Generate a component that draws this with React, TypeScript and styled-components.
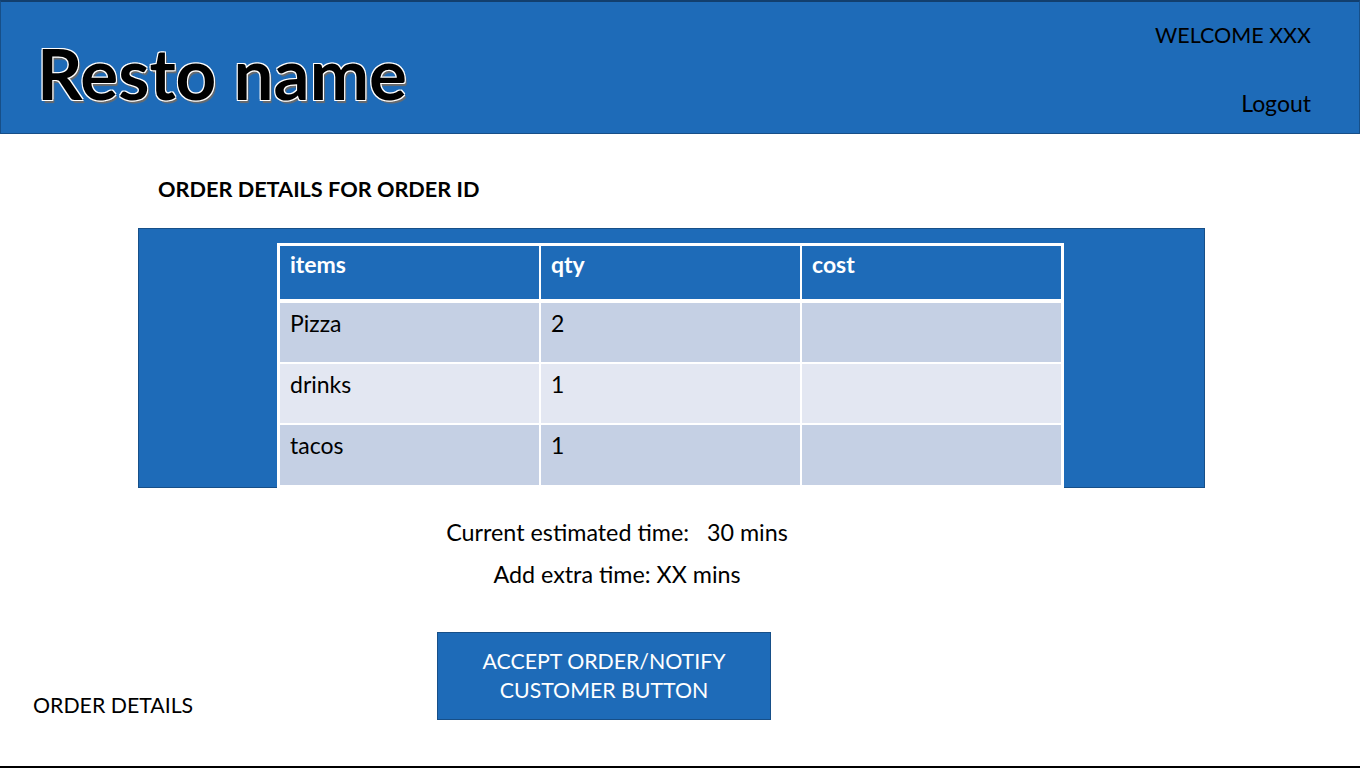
import React from "react";
import styled, { createGlobalStyle } from "styled-components";

const Global = createGlobalStyle`
  html, body { margin: 0; padding: 0; background: #fff; }
  body { font-family: Lato, "Open Sans", sans-serif; color: #000; }
`;

const BLUE = "#1e6bb8";

const Page = styled.div`
  width: 1360px;
  height: 768px;
  box-sizing: border-box;
  border-bottom: 2px solid #000;
  display: flex;
  flex-direction: column;
  overflow: hidden;
`;

const Header = styled.header`
  height: 134px;
  box-sizing: border-box;
  background: ${BLUE};
  border: 1px solid #174f88;
  border-top: 2px solid #123f6e;
  display: flex;
  justify-content: space-between;
  padding: 0 48px 0 36px;
`;

const Brand = styled.h1`
  margin: 0;
  padding-top: 28px;
  font-size: 71px;
  font-weight: 700;
  letter-spacing: 0;
  line-height: 1.2;
  color: #000;
  text-shadow:
    -1px -1px 0 #fff, 1px -1px 0 #fff, -1px 1px 0 #fff, 1px 1px 0 #fff,
    2px 3px 1px #6b6b6b;
`;

const UserBox = styled.div`
  display: flex;
  flex-direction: column;
  align-items: flex-end;
  padding-top: 18px;
  gap: 38px;
  font-size: 21.5px;
  line-height: 30px;
`;

const Logout = styled.span`
  font-size: 23px;
`;

const Main = styled.main`
  flex: 1;
  display: flex;
  flex-direction: column;
`;

const Title = styled.h2`
  margin: 42px 0 0 158px;
  font-size: 21.7px;
  font-weight: 700;
  line-height: 26px;
`;

const Panel = styled.section`
  margin: 26px 0 0 138px;
  width: 1067px;
  height: 260px;
  box-sizing: border-box;
  background: ${BLUE};
  border: 1px solid #174f88;
  display: flex;
  justify-content: flex-start;
  padding: 15px 0 0 139px;
`;

const Table = styled.table`
  border-collapse: collapse;
  width: 785px;
  table-layout: fixed;
  font-size: 23px;
  outline: 1px solid #fff;
`;

const Th = styled.th`
  height: 56px;
  box-sizing: border-box;
  border: 2px solid #fff;
  border-bottom: 4px solid #fff;
  color: #fff;
  font-weight: 700;
  text-align: left;
  vertical-align: top;
  padding: 4px 10px 0;
  line-height: 28px;
`;

const Td = styled.td<{ $alt: boolean }>`
  height: 60px;
  box-sizing: border-box;
  border: 2px solid #fff;
  background: ${(p) => (p.$alt ? "#e3e7f2" : "#c5d0e4")};
  vertical-align: top;
  padding: 6px 10px 0;
  line-height: 28px;
`;

const Info = styled.div`
  margin: 29px 0 0 0;
  width: 1234px;
  display: flex;
  flex-direction: column;
  align-items: center;
  gap: 12px;
  font-size: 23.3px;
  line-height: 30px;
`;

const Footer = styled.div`
  flex: 1;
  display: flex;
  align-items: flex-start;
  padding: 43px 0 0 33px;
`;

const FooterLabel = styled.div`
  margin-top: 58px;
  font-size: 21.3px;
  line-height: 30px;
  width: 404px;
`;

const AcceptButton = styled.button`
  width: 334px;
  height: 88px;
  background: ${BLUE};
  border: 1px solid #174f88;
  color: #fff;
  font-family: inherit;
  font-size: 21.3px;
  line-height: 29px;
  text-align: center;
  padding: 0;
  cursor: pointer;
`;

const rows = [
  { item: "Pizza", qty: "2", cost: "" },
  { item: "drinks", qty: "1", cost: "" },
  { item: "tacos", qty: "1", cost: "" },
];

export default function App() {
  return (
    <>
      <Global />
      <Page>
        <Header>
          <Brand>Resto name</Brand>
          <UserBox>
            <span>WELCOME XXX</span>
            <Logout>Logout</Logout>
          </UserBox>
        </Header>
        <Main>
          <Title>ORDER DETAILS FOR ORDER ID</Title>
          <Panel>
            <Table>
              <thead>
                <tr>
                  <Th>items</Th>
                  <Th>qty</Th>
                  <Th>cost</Th>
                </tr>
              </thead>
              <tbody>
                {rows.map((r, i) => (
                  <tr key={r.item}>
                    <Td $alt={i % 2 === 1}>{r.item}</Td>
                    <Td $alt={i % 2 === 1}>{r.qty}</Td>
                    <Td $alt={i % 2 === 1}>{r.cost}</Td>
                  </tr>
                ))}
              </tbody>
            </Table>
          </Panel>
          <Info>
            <div>Current estimated time:&nbsp;&nbsp; 30 mins</div>
            <div>Add extra time: XX mins</div>
          </Info>
          <Footer>
            <FooterLabel>ORDER DETAILS</FooterLabel>
            <AcceptButton>
              ACCEPT ORDER/NOTIFY
              <br />
              CUSTOMER BUTTON
            </AcceptButton>
          </Footer>
        </Main>
      </Page>
    </>
  );
}
